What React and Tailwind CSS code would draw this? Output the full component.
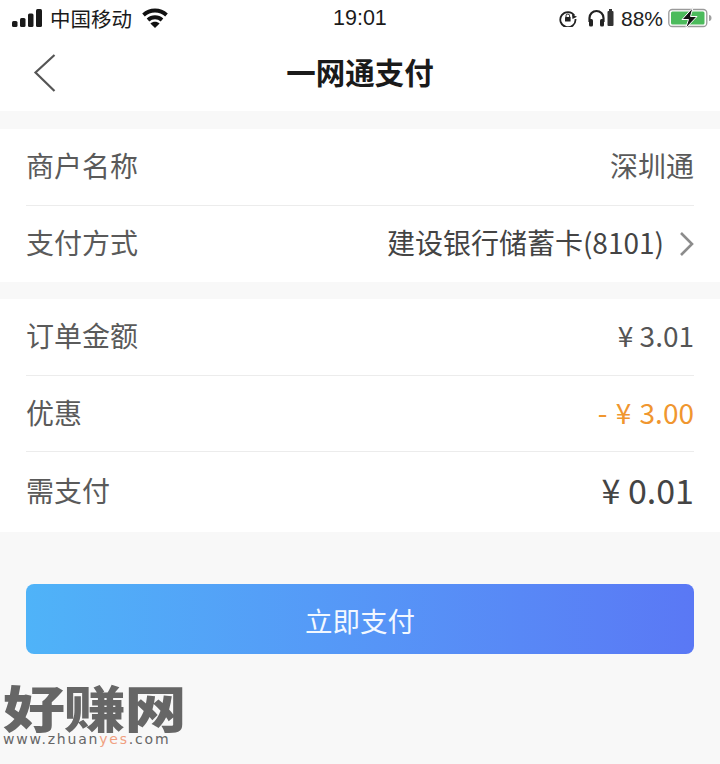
const cjk = { fontFamily: '"Noto Sans CJK SC", "Noto Sans", sans-serif' };

function Row({ label, children, h, border = true }) {
  return (
    <div className={`mx-[26px] flex items-center justify-between pb-[4px] ${h} ${border ? "border-b border-[#ececec]" : ""}`}>
      <span className="text-[28px] leading-none text-[#5a5a5a]">{label}</span>
      {children}
    </div>
  );
}

function StatusBar() {
  return (
    <div className="relative flex h-[36px] items-center justify-between pl-[12px] pr-[8px] text-[#1a1a1a]">
      <div className="flex items-center">
        <svg width="31" height="18" viewBox="0 0 31 18" fill="#1a1a1a">
          <rect x="0" y="12" width="5.500" height="6" rx="1.500" />
          <rect x="8" y="9" width="5.500" height="9" rx="1.500" />
          <rect x="16" y="4.500" width="5.500" height="13.500" rx="1.500" />
          <rect x="24" y="0" width="6" height="18" rx="1.500" />
        </svg>
        <span className="ml-[7px] text-[20.500px] leading-none">中国移动</span>
        <svg className="ml-[10px]" width="26" height="20" viewBox="0 0 26 20" fill="none" stroke="#111" strokeWidth="3.800">
          <path d="M1.500 7C8 1 18 1 24.500 7" />
          <path d="M6 12C10 8.300 16 8.300 20 12" />
          <path d="M13 20l-4.600-4.600C11 13.200 15 13.200 17.600 15.400Z" fill="#111" stroke="none" />
        </svg>
      </div>
      <span className="absolute left-[333px] top-[7px] text-[21.500px] leading-[22px] font-medium" style={{ fontFamily: '"Liberation Sans", sans-serif' }}>19:01</span>
      <div className="flex items-center">
        <svg width="18" height="18" viewBox="0 0 18 18" fill="none" stroke="#222" strokeWidth="1.800">
          <path d="M15.300 6.500A7.600 7.600 0 1 0 16.500 10" />
          <path d="M13 5.500 18 7.800l-4.500 2.200Z" fill="#222" stroke="none" />
          <rect x="6" y="8" width="5.600" height="4.400" rx="0.500" fill="#222" stroke="none" />
          <path d="M7 8V6.800a1.800 1.800 0 0 1 3.600 0V8" strokeWidth="1" />
        </svg>
        <svg className="ml-[11px]" width="17" height="18" viewBox="0 0 17 18" fill="none" stroke="#222" strokeWidth="2.200">
          <path d="M1.500 13V9a7 7 0 0 1 14 0v4" />
          <rect x="1" y="10" width="4" height="7.500" rx="1.500" fill="#222" stroke="none" />
          <rect x="12" y="10" width="4" height="7.500" rx="1.500" fill="#222" stroke="none" />
        </svg>
        <svg className="ml-[2px]" width="7" height="18" viewBox="0 0 7 18" fill="#333">
          <rect x="2" y="0" width="3" height="2" />
          <rect x="0.500" y="2" width="6" height="15" rx="1" />
        </svg>
        <span className="ml-[7px] text-[21px] leading-none text-[#222]" style={{ fontFamily: '"Liberation Sans", sans-serif' }}>88%</span>
        <svg className="ml-[5px]" width="44" height="22" viewBox="0 0 44 22" fill="none">
          <rect x="0.800" y="2.500" width="38" height="17" rx="3.500" stroke="#9a9a9a" strokeWidth="1.300" />
          <rect x="3" y="4.500" width="33.500" height="13" rx="1.500" fill="#4cbb5c" />
          <path d="M41 8v6c1.500 0 2.500-1.200 2.500-3S42.500 8 41 8Z" fill="#a0a0a0" />
          <path d="M25 0.500 14 12.500h6.500L17.500 21.500 29 9.500h-6.500Z" fill="#111" stroke="#fff" strokeWidth="1" />
        </svg>
      </div>
    </div>
  );
}

export default function App() {
  return (
    <div className="flex h-[764px] w-[720px] flex-col overflow-hidden bg-[#f8f8f8]" style={cjk}>
      <div className="bg-white">
        <StatusBar />
        <div className="relative flex h-[75px] items-center justify-center pb-[4px]">
          <svg className="absolute left-[33px] top-[17px]" width="24" height="40" viewBox="0 0 24 40" fill="none" stroke="#555" strokeWidth="2.200">
            <path d="M21.500 2 2.500 19.500 21.500 38" />
          </svg>
          <span className="text-[29.500px] font-bold leading-none text-[#1a1a1a]">一网通支付</span>
        </div>
      </div>

      <div className="mt-[18px] bg-white">
        <Row label="商户名称" h="h-[77px]">
          <span className="text-[28px] leading-none text-[#5a5a5a]">深圳通</span>
        </Row>
        <Row label="支付方式" h="h-[76px]" border={false}>
          <div className="flex items-center">
            <span className="text-[28px] leading-none text-[#444]">建设银行储蓄卡(8101)</span>
            <svg className="ml-[15px] mt-[4px]" width="15" height="26" viewBox="0 0 15 26" fill="none" stroke="#8c8c8c" strokeWidth="2.600">
              <path d="M2 2 13 13 2 24" />
            </svg>
          </div>
        </Row>
      </div>

      <div className="mt-[17px] bg-white">
        <Row label="订单金额" h="h-[77px]">
          <span className="text-[28px] leading-none text-[#555]">¥ 3.01</span>
        </Row>
        <Row label="优惠" h="h-[76px]">
          <span className="text-[28px] leading-none text-[#f0962f] [word-spacing:2px]">- ¥ 3.00</span>
        </Row>
        <Row label="需支付" h="h-[80px]" border={false}>
          <span className="text-[34px] leading-none text-[#444]">¥ 0.01</span>
        </Row>
      </div>

      <div className="mx-[26px] mt-[52px] flex h-[70px] items-center justify-center rounded-[8px] bg-gradient-to-r from-[#4fb3f8] to-[#5a78f5] pt-[4px]">
        <span className="text-[27.500px] leading-none text-[#f2f8ff]">立即支付</span>
      </div>

      <div className="ml-[3px] mt-[26px] flex w-[190px] flex-col">
        <span className="inline-block w-fit origin-left scale-x-[1.24] text-[50px] font-black leading-[52px] tracking-[-1px] text-[#666]">好赚网</span>
        <span className="text-[14px] leading-[14px] tracking-[1.800px] text-[#666]" style={{ fontFamily: '"DejaVu Sans", sans-serif' }}>
          www.zhuan<span className="text-[#f0a080]">yes</span>.com
        </span>
      </div>
    </div>
  );
}
